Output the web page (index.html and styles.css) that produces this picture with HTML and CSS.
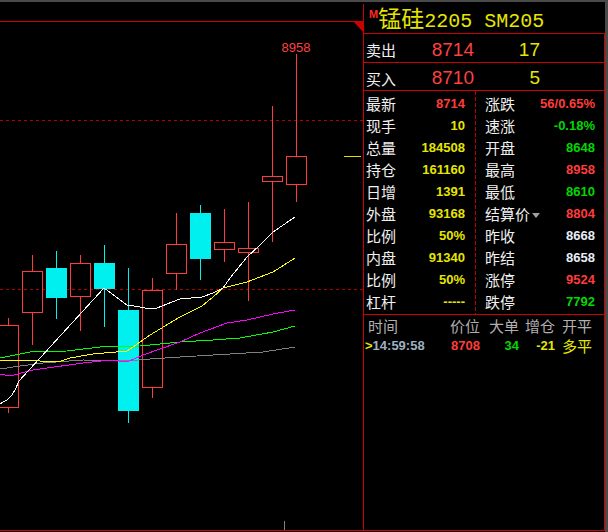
FILE: index.html
```html
<!DOCTYPE html>
<html>
<head>
<meta charset="utf-8">
<link rel="stylesheet" href="styles.css">
</head>
<body>
<div class="app">
  <div class="topbar"></div>
  <div class="main">
    <div class="chart">
      <svg class="chart-svg" width="363" height="530" viewBox="0 2 363 530">
        <line class="frame" x1="0" y1="21.5" x2="363" y2="21.5"/>
        <polygon class="corner" points="353,21 363,21 363,32"/>
        <line class="dash" x1="0" y1="120.5" x2="363" y2="120.5"/>
        <line class="dash" x1="0" y1="289.5" x2="363" y2="289.5"/>
        <line class="last" x1="344" y1="156.5" x2="361" y2="156.5"/>
        <line class="frame" x1="0" y1="530.5" x2="363" y2="530.5"/>
        <line class="tick" x1="284.5" y1="521" x2="284.5" y2="530"/>

        <!-- red hollow candles -->
        <g class="up">
          <line x1="8.5" y1="318" x2="8.5" y2="325"/><line x1="8.5" y1="408" x2="8.5" y2="413"/>
          <rect x="-1.5" y="325.5" width="20" height="82"/>
          <line x1="32.5" y1="255" x2="32.5" y2="271"/><line x1="32.5" y1="313" x2="32.5" y2="345"/>
          <rect x="22.5" y="271.5" width="20" height="41"/>
          <line x1="80.5" y1="255" x2="80.5" y2="263"/><line x1="80.5" y1="297" x2="80.5" y2="331"/>
          <rect x="70.5" y="263.5" width="20" height="33"/>
          <line x1="152.5" y1="278" x2="152.5" y2="290"/><line x1="152.5" y1="388" x2="152.5" y2="398"/>
          <rect x="142.5" y="290.5" width="20" height="97"/>
          <line x1="176.5" y1="213" x2="176.5" y2="244"/><line x1="176.5" y1="274" x2="176.5" y2="290"/>
          <rect x="166.5" y="244.5" width="20" height="29"/>
          <line x1="224.5" y1="209" x2="224.5" y2="242"/><line x1="224.5" y1="250" x2="224.5" y2="262"/>
          <rect x="214.5" y="242.5" width="20" height="7"/>
          <line x1="248.5" y1="202" x2="248.5" y2="248"/><line x1="248.5" y1="253" x2="248.5" y2="301"/>
          <rect x="238.5" y="248.5" width="20" height="4"/>
          <line x1="272.5" y1="106" x2="272.5" y2="176"/><line x1="272.5" y1="182" x2="272.5" y2="242"/>
          <rect x="262.5" y="176.5" width="20" height="5"/>
          <line x1="296.5" y1="54" x2="296.5" y2="156"/><line x1="296.5" y1="185" x2="296.5" y2="202"/>
          <rect x="286.5" y="156.5" width="20" height="28"/>
        </g>
        <!-- cyan filled candles -->
        <g class="down">
          <line x1="56.5" y1="251" x2="56.5" y2="319"/>
          <rect x="46" y="268" width="21" height="30"/>
          <line x1="104.5" y1="245" x2="104.5" y2="327"/>
          <rect x="94" y="263" width="21" height="26"/>
          <line x1="128.5" y1="268" x2="128.5" y2="423"/>
          <rect x="118" y="310" width="21" height="101"/>
          <line x1="200.5" y1="205" x2="200.5" y2="280"/>
          <rect x="190" y="213" width="21" height="46"/>
        </g>

        <polyline class="ma ma-gray" points="0,369 20,366 43,363 83,360 127,361 150,359 180,357 230,354 263,352 295,347"/>
        <polyline class="ma ma-green" points="0,358 30,352 67,351 100,347 140,346 180,342 213,340 240,338 273,332 295,326"/>
        <polyline class="ma ma-magenta" points="0,374 10,376 33,370 83,363 110,360 127,362 143,355 180,342 200,333 227,323 247,320 273,314 295,310"/>
        <polyline class="ma ma-yellow" points="0,360 40,361 58,362 70,358 93,354 127,351 133,347 150,335 180,317 202,306 213,297 223,288 247,282 273,272 295,258"/>
        <polyline class="ma ma-white" points="0,404 3,402 7,400 12,395 15,390 19,381 104,288 127,305 140,307 150,309 157,308 167,304 180,299 202,297 213,293 223,288 230,278 247,257 260,245 273,232 295,217"/>

        <text class="hi-label" x="296" y="52">8958</text>
      </svg>
    </div>

    <div class="panel">
      <div class="header">
        <span class="mark">M</span>
        <span class="title"><span class="cn">锰硅</span>2205 SM205</span>
      </div>
      <div class="body">
        <div class="quote q1">
          <span class="lbl">卖出</span><span class="px">8714</span><span class="qty">17</span>
        </div>
        <div class="quote q2">
          <span class="lbl">买入</span><span class="px">8710</span><span class="qty">5</span>
        </div>

        <div class="stats">
          <div class="col col-left">
            <div class="row"><span class="lbl">最新</span><span class="val red">8714</span></div>
            <div class="row"><span class="lbl">现手</span><span class="val yel">10</span></div>
            <div class="row"><span class="lbl">总量</span><span class="val yel">184508</span></div>
            <div class="row"><span class="lbl">持仓</span><span class="val yel">161160</span></div>
            <div class="row"><span class="lbl">日增</span><span class="val yel">1391</span></div>
            <div class="row"><span class="lbl">外盘</span><span class="val yel">93168</span></div>
            <div class="row"><span class="lbl">比例</span><span class="val yel">50%</span></div>
            <div class="row"><span class="lbl">内盘</span><span class="val yel">91340</span></div>
            <div class="row"><span class="lbl">比例</span><span class="val yel">50%</span></div>
            <div class="row"><span class="lbl">杠杆</span><span class="val yel">-----</span></div>
          </div>
          <div class="divider"></div>
          <div class="col col-right">
            <div class="row"><span class="lbl">涨跌</span><span class="val red">56/0.65%</span></div>
            <div class="row"><span class="lbl">速涨</span><span class="val grn">-0.18%</span></div>
            <div class="row"><span class="lbl">开盘</span><span class="val grn">8648</span></div>
            <div class="row"><span class="lbl">最高</span><span class="val red">8958</span></div>
            <div class="row"><span class="lbl">最低</span><span class="val grn">8610</span></div>
            <div class="row"><span class="lbl">结算价<span class="caret"></span></span><span class="val red">8804</span></div>
            <div class="row"><span class="lbl">昨收</span><span class="val wht">8668</span></div>
            <div class="row"><span class="lbl">昨结</span><span class="val wht">8658</span></div>
            <div class="row"><span class="lbl">涨停</span><span class="val red">9524</span></div>
            <div class="row"><span class="lbl">跌停</span><span class="val grn">7792</span></div>
          </div>
        </div>

        <div class="trades">
          <div class="trow thead">
            <span class="c1">时间</span><span>价位</span><span>大单</span><span>增仓</span><span>开平</span>
          </div>
          <div class="trow tdata">
            <span class="c1"><span class="arrow">&gt;</span><span class="time">14:59:58</span></span>
            <span class="red">8708</span><span class="grn">34</span><span class="yel">-21</span><span class="kp">多平</span>
          </div>
        </div>
      </div>
    </div>
    <div class="rstrip"></div>
  </div>
</div>
</body>
</html>
```

FILE: styles.css
```css
* {
  box-sizing: border-box;
  margin: 0;
  padding: 0;
}

html, body {
  background: #000;
}

body {
  width: 608px;
  height: 532px;
  overflow: hidden;
  font-family: "Liberation Sans", "Noto Sans CJK SC", sans-serif;
  color: #f0f0f0;
}

.topbar {
  height: 2px;
  background: #4a4a4a;
}

.main {
  display: flex;
  height: 530px;
}

.chart {
  width: 363px;
  flex: none;
}

.chart-svg {
  display: block;
}

/* chart drawing */
.frame { stroke: #cc0000; stroke-width: 1; shape-rendering: crispEdges; }
.corner { fill: #cc0000; }
.dash { stroke: #b00000; stroke-width: 1; stroke-dasharray: 3 3; shape-rendering: crispEdges; }
.last { stroke: #e0e000; stroke-width: 1; shape-rendering: crispEdges; }
.tick { stroke: #808080; stroke-width: 1; shape-rendering: crispEdges; }

.up line { stroke: #ff3c3c; stroke-width: 1; shape-rendering: crispEdges; }
.up rect { fill: none; stroke: #ff3c3c; stroke-width: 1; shape-rendering: crispEdges; }
.down line { stroke: #00f0f0; stroke-width: 1; shape-rendering: crispEdges; }
.down rect { fill: #00f0f0; shape-rendering: crispEdges; }

.ma { fill: none; stroke-width: 1; shape-rendering: crispEdges; }
.ma-white { stroke: #ffffff; }
.ma-yellow { stroke: #ffff00; }
.ma-green { stroke: #00ff00; }
.ma-magenta { stroke: #ff00ff; }
.ma-gray { stroke: #808080; }

.hi-label {
  fill: #ff4040;
  font-family: "Liberation Sans", sans-serif;
  font-size: 13px;
  text-anchor: middle;
}

/* right panel */
.panel {
  width: 242px;
  flex: none;
  margin-top: 2px;
  height: 527px;
  border-left: 1px solid #cc0000;
  border-bottom: 1px solid #cc0000;
  display: flex;
  flex-direction: column;
}

.rstrip {
  width: 3px;
  flex: none;
  background: #4a4a4a;
}

.header {
  height: 30px;
  flex: none;
  border-bottom: 1px solid #cc0000;
  display: flex;
  align-items: flex-start;
  padding-left: 5px;
}

.mark {
  font-family: "Liberation Sans", sans-serif;
  font-weight: bold;
  font-size: 11px;
  line-height: 11px;
  color: #ff2a2a;
  margin-top: 5px;
}

.title {
  font-family: "Liberation Mono", monospace;
  font-size: 20px;
  line-height: 24px;
  color: #e6e600;
  padding-top: 1px;
  white-space: pre;
}

.title .cn {
  font-family: "Noto Sans CJK SC", sans-serif;
  font-size: 23px;
}

.body {
  flex: 1;
  border-right: 1px solid #cc0000;
  display: flex;
  flex-direction: column;
}

.lbl {
  font-family: "Noto Sans CJK SC", sans-serif;
  font-size: 15px;
  color: #f0f0f0;
  white-space: nowrap;
}

.quote {
  display: grid;
  grid-template-columns: 54px 54px 66px;
  align-items: center;
  padding-left: 2px;
  padding-top: 3px;
  border-bottom: 1px solid #cc0000;
  flex: none;
}

.q1 { height: 29px; }
.q2 { height: 28px; }

.px {
  text-align: right;
  font-size: 19px;
  color: #ff4040;
}

.qty {
  text-align: right;
  font-size: 19px;
  color: #e6e600;
}

.stats {
  height: 224px;
  flex: none;
  display: flex;
  padding: 1px 0;
  border-bottom: 1px solid #cc0000;
}

.col {
  display: flex;
  flex-direction: column;
}

.col-left {
  width: 111px;
  padding: 0 10px 0 2px;
}

.col-right {
  flex: 1;
  padding: 0 9px 0 9px;
}

.divider {
  width: 1px;
  flex: none;
  margin: -1px 0;
  background: repeating-linear-gradient(to bottom, #c00000 0 4px, transparent 4px 6px);
}

.row {
  height: 22px;
  display: flex;
  justify-content: space-between;
  align-items: center;
}

.val {
  font-weight: bold;
  font-size: 13px;
}

.red { color: #ff3c3c; }
.yel { color: #e6e600; }
.grn { color: #00d800; }
.wht { color: #e8eef8; }

.caret {
  display: inline-block;
  width: 0;
  height: 0;
  border-left: 4px solid transparent;
  border-right: 4px solid transparent;
  border-top: 5px solid #a0a0a0;
  margin-left: 2px;
  vertical-align: middle;
}

.trades {
  flex: 1;
}

.trow {
  display: grid;
  grid-template-columns: 60px 55px 39px 36px 37px;
  align-items: center;
  padding-left: 1px;
}

.trow > span {
  text-align: right;
  white-space: nowrap;
}

.trow > .c1 {
  text-align: left;
}

.thead {
  height: 20px;
  font-family: "Noto Sans CJK SC", sans-serif;
  font-size: 15px;
  color: #b0b0b0;
}

.thead .c1 {
  padding-left: 3px;
}

.tdata {
  height: 17px;
  font-weight: bold;
  font-size: 13px;
}

.arrow {
  color: #e6e600;
  font-weight: bold;
}

.time {
  color: #9fb0c0;
}

.kp {
  font-family: "Noto Sans CJK SC", sans-serif;
  font-weight: normal;
  font-size: 15px;
  color: #e6e600;
}
```
